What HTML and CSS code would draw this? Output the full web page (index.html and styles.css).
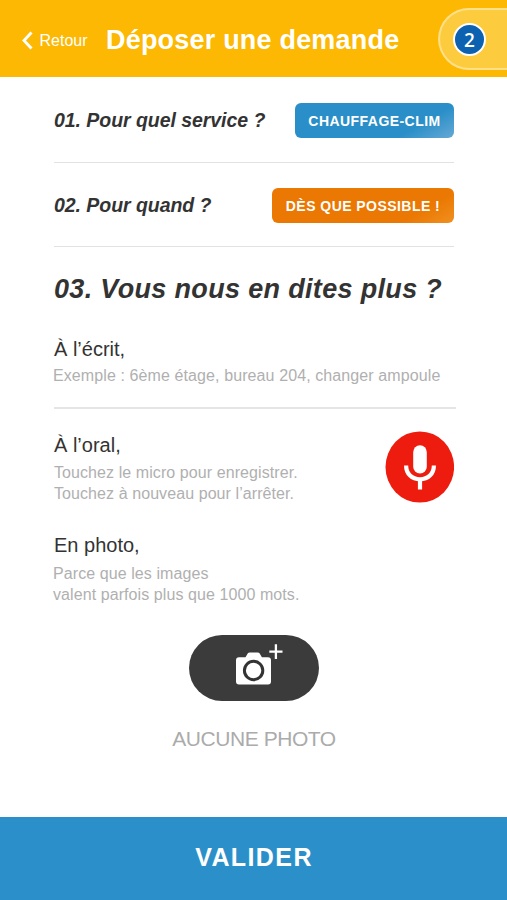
FILE: index.html
```html
<!DOCTYPE html>
<html lang="fr">
<head>
<meta charset="utf-8">
<title>Déposer une demande</title>
<link rel="stylesheet" href="styles.css">
</head>
<body>
<header class="header">
  <a class="back"><svg class="chevron" width="12" height="20" viewBox="0 0 12 20"><path d="M10.500 1.500 3 9.500 10.500 17.500" fill="none" stroke="currentColor" stroke-width="2.900"/></svg><span>Retour</span></a>
  <h1 class="title">Déposer une demande</h1>
  <div class="tab"><span class="count">2</span></div>
</header>
<main class="main">
  <section class="row">
    <h2 class="question">01. Pour quel service ?</h2>
    <button class="tag tag-blue">CHAUFFAGE-CLIM</button>
  </section>
  <section class="row row-second">
    <h2 class="question">02. Pour quand ?</h2>
    <button class="tag tag-orange">DÈS QUE POSSIBLE !</button>
  </section>
  <h2 class="heading">03. Vous nous en dites plus ?</h2>
  <section class="written">
    <h3 class="label">À l’écrit,</h3>
    <p class="hint example">Exemple : 6ème étage, bureau 204, changer ampoule</p>
  </section>
  <section class="oral">
    <div>
      <h3 class="label">À l’oral,</h3>
      <p class="hint spoken">Touchez le micro pour enregistrer.<br>Touchez à nouveau pour l’arrêter.</p>
    </div>
    <button class="mic" aria-label="Enregistrer">
      <svg width="69" height="72" viewBox="0 0 69 72"><ellipse cx="34.8" cy="36" rx="34.3" ry="35.6" fill="#ee1c0e"/><rect x="28.2" y="14.300" width="13.600" height="28.300" rx="6.800" fill="#fff"/><path d="M21.100 34.500C21.100 43 27 48.300 35 48.300S48.900 43 48.900 34.500M35 48v10.400" fill="none" stroke="#fff" stroke-width="4.200"/></svg>
    </button>
  </section>
  <section class="photo">
    <h3 class="label">En photo,</h3>
    <p class="hint picture">Parce que les images<br>valent parfois plus que 1000 mots.</p>
    <button class="camera" aria-label="Ajouter une photo">
      <svg width="130" height="66" viewBox="0 0 130 66"><path d="M50 22.200h6.500l2.200-3.600q.7-1.200 2-1.200h8q1.300 0 2 1.200l2.200 3.600H79q3 0 3 3V46.500q0 3-3 3H50q-3 0-3-3V25.200q0-3 3-3Z" fill="#fff"/><circle cx="64.600" cy="35.500" r="9.200" fill="#fff" stroke="#333" stroke-width="3"/><path d="M86.900 9.300v14.800M80.300 16.700h13.200" stroke="#fff" stroke-width="2.300"/></svg>
    </button>
    <p class="empty">AUCUNE PHOTO</p>
  </section>
</main>
<button class="submit">VALIDER</button>
</body>
</html>
```
FILE: styles.css
```css
* { box-sizing: border-box; }
body {
  margin: 0;
  height: 900px;
  display: flex;
  flex-direction: column;
  overflow: hidden;
  background: #fff;
  color: #333;
  font-family: "Liberation Sans", Arial, sans-serif;
}
h1, h2, h3, p { margin: 0; }
button { border: 0; padding: 0; font-family: inherit; color: #fff; }

.header {
  height: 77px;
  flex: none;
  display: flex;
  align-items: flex-start;
  background: #fcb802;
  color: #fff;
}
.back {
  display: flex;
  align-items: center;
  width: 106px;
  height: 81px;
  padding-left: 21px;
  font-size: 16px;
}
.chevron { margin-right: 6.500px; }
.title {
  font-size: 27px;
  line-height: 80px;
  letter-spacing: .2px;
  white-space: nowrap;
  flex: 1;
}
.tab {
  width: 69px;
  height: 62px;
  margin-top: 8px;
  padding: 13px 0 0 13px;
  border: 2px solid #fee08a;
  border-right: 0;
  border-radius: 31px 0 0 31px;
  background: #fdcb3e;
}
.count {
  display: block;
  width: 33px;
  height: 33px;
  border: 2px solid #fff;
  border-radius: 50%;
  background: #0c62b0;
  font: 600 19px/30px "Open Sans", sans-serif;
  text-align: center;
}

.main { flex: 1; padding: 0 53px 0 54px; }
.row {
  height: 86px;
  display: flex;
  justify-content: space-between;
  align-items: center;
  border-bottom: 1px solid #e2e2e2;
}
.row-second { height: 84px; }
.question {
  font-size: 19.5px;
  line-height: 24px;
  font-style: italic;
  letter-spacing: -.05px;
  white-space: nowrap;
}
.tag {
  height: 35px;
  margin-top: 2px;
  border-radius: 6px;
  font-size: 14px;
  font-weight: bold;
  line-height: 34px;
  letter-spacing: .45px;
  white-space: nowrap;
}
.tag-blue {
  width: 159px;
  background: linear-gradient(150deg, #2a8fc8 74%, #65a9d5 100%);
}
.tag-orange {
  width: 182px;
  background: linear-gradient(150deg, #eb7802 78%, #f09020 100%);
}
.heading {
  padding-top: 24px;
  font-size: 27px;
  line-height: 36px;
  font-style: italic;
  letter-spacing: .33px;
  white-space: nowrap;
}
.label {
  font-size: 20px;
  font-weight: normal;
  line-height: 28px;
}
.hint {
  color: #b0b0b0;
  font-size: 16px;
  line-height: 21px;
  letter-spacing: .08px;
  white-space: nowrap;
}
.written {
  height: 102px;
  margin-right: -2px;
  padding-top: 28px;
  border-bottom: 2px solid #e5e5e5;
}
.example { padding-top: 2px; margin-left: -1px; letter-spacing: .1px; }
.oral {
  display: flex;
  justify-content: space-between;
  padding-top: 22px;
}
.spoken { padding-top: 3px; }
.mic { height: 72px; background: none; }
.mic svg, .camera svg { display: block; }
.photo { display: flex; flex-direction: column; padding-top: 27px; }
.picture { padding-top: 4px; margin-left: -1px; }
.camera {
  width: 130px;
  height: 66px;
  margin: 30px auto 0;
  border-radius: 33px;
  background: #3b3b3b;
}
.empty {
  margin-top: 24px;
  color: #ababab;
  font-size: 21px;
  line-height: 28px;
  letter-spacing: -.45px;
  text-align: center;
}
.submit {
  flex: none;
  height: 83px;
  padding: 0 0 2px 1px;
  background: #2b90c9;
  font-size: 25px;
  font-weight: bold;
  letter-spacing: 1.4px;
}
```
